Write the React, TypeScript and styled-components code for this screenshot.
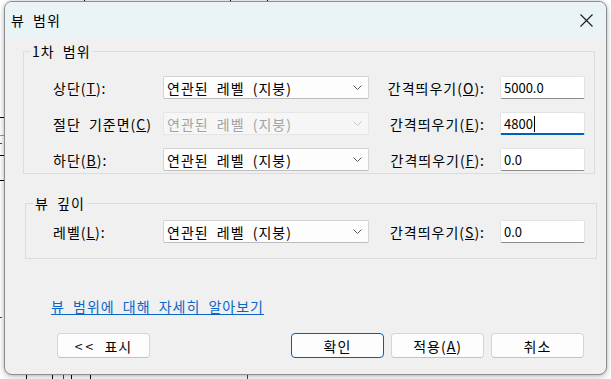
import React from "react";
import styled, { createGlobalStyle, css } from "styled-components";

const GlobalStyle = createGlobalStyle`
  html, body { margin: 0; padding: 0; background: #ffffff; }
  body {
    font-family: "Noto Sans CJK KR", "Noto Sans", sans-serif;
    color: #000;
    -webkit-font-smoothing: antialiased;
  }
  * { box-sizing: border-box; }
`;

const uiText = css`
  font-size: 14px;
  line-height: 16px;
  letter-spacing: 1px;
  word-spacing: 4px;
  white-space: nowrap;
`;

const Page = styled.div`
  position: relative;
  width: 611px;
  height: 379px;
  overflow: hidden;
  padding: 1px 4px 0 4px;
  background: #ffffff;
`;

const Backdrop = styled.svg`
  position: absolute;
  left: 0;
  top: 0;
  width: 611px;
  height: 379px;
`;

const Dialog = styled.div`
  position: relative;
  width: 603px;
  height: 374px;
  border: 1px solid #8e8e8e;
  border-radius: 8px;
  overflow: hidden;
  background: #f0f0f0;
  display: flex;
  flex-direction: column;
  box-shadow: 0 0 3px rgba(0, 0, 0, 0.22), 0 3px 8px rgba(0, 0, 0, 0.18);
`;

const TitleBar = styled.div`
  height: 36px;
  flex: none;
  background: #eaf3f6;
  display: flex;
  align-items: center;
  justify-content: space-between;
  padding-left: 6px;
`;

const Title = styled.span`
  ${uiText}
`;

const CloseButton = styled.div`
  width: 40px;
  height: 36px;
  display: flex;
  align-items: center;
  justify-content: center;
`;

const Body = styled.div`
  flex: 1;
  display: flex;
  flex-direction: column;
  padding: 5px 0 0 0;
`;

const Group = styled.fieldset<{ $left: number; $right: number; $top: number; $pt: number; $pb: number }>`
  margin: ${(p) => p.$top}px ${(p) => p.$right}px 0 ${(p) => p.$left}px;
  padding: ${(p) => p.$pt}px 0 ${(p) => p.$pb}px 0;
  border: 1px solid #dcdcdc;
  min-width: 0;
`;

const Legend = styled.legend<{ $shift: number }>`
  margin-left: ${(p) => p.$shift}px;
  padding: 0 2px;
  ${uiText}
`;

const Rows = styled.div<{ $indent: number }>`
  margin-left: ${(p) => p.$indent}px;
  display: grid;
  grid-template-columns: 110px 206px 131px 85px;
  grid-auto-rows: 23px;
  row-gap: 13px;
  align-items: center;
`;

const FieldLabel = styled.span`
  ${uiText}
`;

const OffsetLabel = styled(FieldLabel)`
  justify-self: end;
  padding-right: 15px;
`;

const Combo = styled.div<{ $disabled?: boolean }>`
  height: 23px;
  display: flex;
  align-items: center;
  justify-content: space-between;
  padding: 0 6px 0 3px;
  background: ${(p) => (p.$disabled ? "#f6f6f6" : "#fdfdfd")};
  border: 1px solid ${(p) => (p.$disabled ? "#e6e6e6" : "#d3d3d3")};
  border-bottom-color: ${(p) => (p.$disabled ? "#e6e6e6" : "#bdbdbd")};
  border-radius: 2px;
  color: ${(p) => (p.$disabled ? "#a3a3a3" : "#000")};
`;

const ComboText = styled.span`
  ${uiText}
`;

const Field = styled.div<{ $focused?: boolean }>`
  height: 23px;
  display: flex;
  align-items: center;
  padding: ${(p) => (p.$focused ? "1px 0 0 3px" : "0 0 0 3px")};
  background: #ffffff;
  border: 1px solid #e3e3e3;
  border-bottom: ${(p) => (p.$focused ? "2px solid #005fb8" : "1px solid #8a8a8a")};
  border-radius: 2px;
  font-size: 13px;
  line-height: 16px;
`;

const Caret = styled.span`
  display: inline-block;
  width: 1px;
  height: 16px;
  background: #000;
  margin-left: 1px;
`;

const HelpLink = styled.a`
  margin: 39px 0 0 46px;
  align-self: flex-start;
  ${uiText}
  color: #0a66c8;
  text-decoration: underline;
  text-underline-offset: 2px;
  cursor: pointer;
`;

const Footer = styled.div`
  margin-top: 19px;
  display: flex;
  justify-content: space-between;
  padding: 0 22px 0 52px;
`;

const ButtonGroup = styled.div`
  display: flex;
  gap: 7px;
`;

const Button = styled.div<{ $default?: boolean }>`
  width: 93px;
  height: 25px;
  display: flex;
  align-items: center;
  justify-content: center;
  background: #fdfdfd;
  border: 1px solid ${(p) => (p.$default ? "#005fb8" : "#d5d5d5")};
  border-bottom-color: ${(p) => (p.$default ? "#005fb8" : "#c2c2c2")};
  border-radius: 4px;
`;

const ButtonLabel = styled.span`
  ${uiText}
`;

const Angles = styled.span`
  letter-spacing: 3px;
`;

const Chevron = ({ disabled }: { disabled?: boolean }) => (
  <svg width="9" height="5" viewBox="0 0 9 5">
    <path d="M0.5 0.5 L4.5 4.5 L8.5 0.5" fill="none" stroke={disabled ? "#c6c6c6" : "#5a5a5a"} strokeWidth="1" />
  </svg>
);

const CloseIcon = () => (
  <svg width="13" height="13" viewBox="0 0 13 13">
    <path d="M0.5 0.5 L12.5 12.5 M12.5 0.5 L0.5 12.5" stroke="#1b1b1b" strokeWidth="1.1" fill="none" />
  </svg>
);

const ComboBox = ({ text, disabled }: { text: string; disabled?: boolean }) => (
  <Combo $disabled={disabled}>
    <ComboText>{text}</ComboText>
    <Chevron disabled={disabled} />
  </Combo>
);

const LEVEL = "연관된 레벨 (지붕)";

export default function App() {
  return (
    <>
      <GlobalStyle />
      <Page>
        <Backdrop viewBox="0 0 611 379">
          <g stroke="#000" strokeWidth="1">
            <line x1="0" y1="117.5" x2="5" y2="117.5" />
            <line x1="0" y1="135.5" x2="5" y2="135.5" stroke="#9a9a9a" />
            <line x1="0" y1="155.5" x2="5" y2="155.5" />
            <line x1="0" y1="180.5" x2="5" y2="180.5" />
            <line x1="26.5" y1="374" x2="26.5" y2="379" />
            <line x1="52.5" y1="374" x2="52.5" y2="379" />
            <line x1="71.5" y1="374" x2="71.5" y2="379" />
            <line x1="90.5" y1="374" x2="90.5" y2="379" />
            <line x1="84.5" y1="0" x2="84.5" y2="1" />
            <line x1="230.5" y1="0" x2="230.5" y2="1" />
            <line x1="267.5" y1="0" x2="267.5" y2="1" />
          </g>
          <g stroke="#e00000" strokeWidth="1">
            <line x1="0" y1="143.5" x2="2" y2="143.5" />
            <line x1="0" y1="317.5" x2="2" y2="317.5" />
            <line x1="63.5" y1="374" x2="63.5" y2="379" />
            <line x1="247.5" y1="374" x2="247.5" y2="379" />
          </g>
        </Backdrop>
        <Dialog>
          <TitleBar>
            <Title>뷰 범위</Title>
            <CloseButton>
              <CloseIcon />
            </CloseButton>
          </TitleBar>
          <Body>
            <Group $left={18} $right={11} $top={0} $pt={17} $pb={2}>
              <Legend $shift={6}>1차 범위</Legend>
              <Rows $indent={29}>
                <FieldLabel>
                  상단(<u>T</u>):
                </FieldLabel>
                <ComboBox text={LEVEL} />
                <OffsetLabel>
                  간격띄우기(<u>O</u>):
                </OffsetLabel>
                <Field>5000.0</Field>

                <FieldLabel>
                  절단 기준면(<u>C</u>)
                </FieldLabel>
                <ComboBox text={LEVEL} disabled />
                <OffsetLabel>
                  간격띄우기(<u>E</u>):
                </OffsetLabel>
                <Field $focused>
                  4800
                  <Caret />
                </Field>

                <FieldLabel>
                  하단(<u>B</u>):
                </FieldLabel>
                <ComboBox text={LEVEL} />
                <OffsetLabel>
                  간격띄우기(<u>F</u>):
                </OffsetLabel>
                <Field>0.0</Field>
              </Rows>
            </Group>

            <Group $left={20} $right={9} $top={21} $pt={9} $pb={15}>
              <Legend $shift={7}>뷰 깊이</Legend>
              <Rows $indent={27}>
                <FieldLabel>
                  레벨(<u>L</u>):
                </FieldLabel>
                <ComboBox text={LEVEL} />
                <OffsetLabel>
                  간격띄우기(<u>S</u>):
                </OffsetLabel>
                <Field>0.0</Field>
              </Rows>
            </Group>

            <HelpLink>뷰 범위에 대해 자세히 알아보기</HelpLink>

            <Footer>
              <Button>
                <ButtonLabel>
                  <Angles>&lt;&lt;</Angles> 표시
                </ButtonLabel>
              </Button>
              <ButtonGroup>
                <Button $default>
                  <ButtonLabel>확인</ButtonLabel>
                </Button>
                <Button>
                  <ButtonLabel>
                    적용(<u>A</u>)
                  </ButtonLabel>
                </Button>
                <Button>
                  <ButtonLabel>취소</ButtonLabel>
                </Button>
              </ButtonGroup>
            </Footer>
          </Body>
        </Dialog>
      </Page>
    </>
  );
}
